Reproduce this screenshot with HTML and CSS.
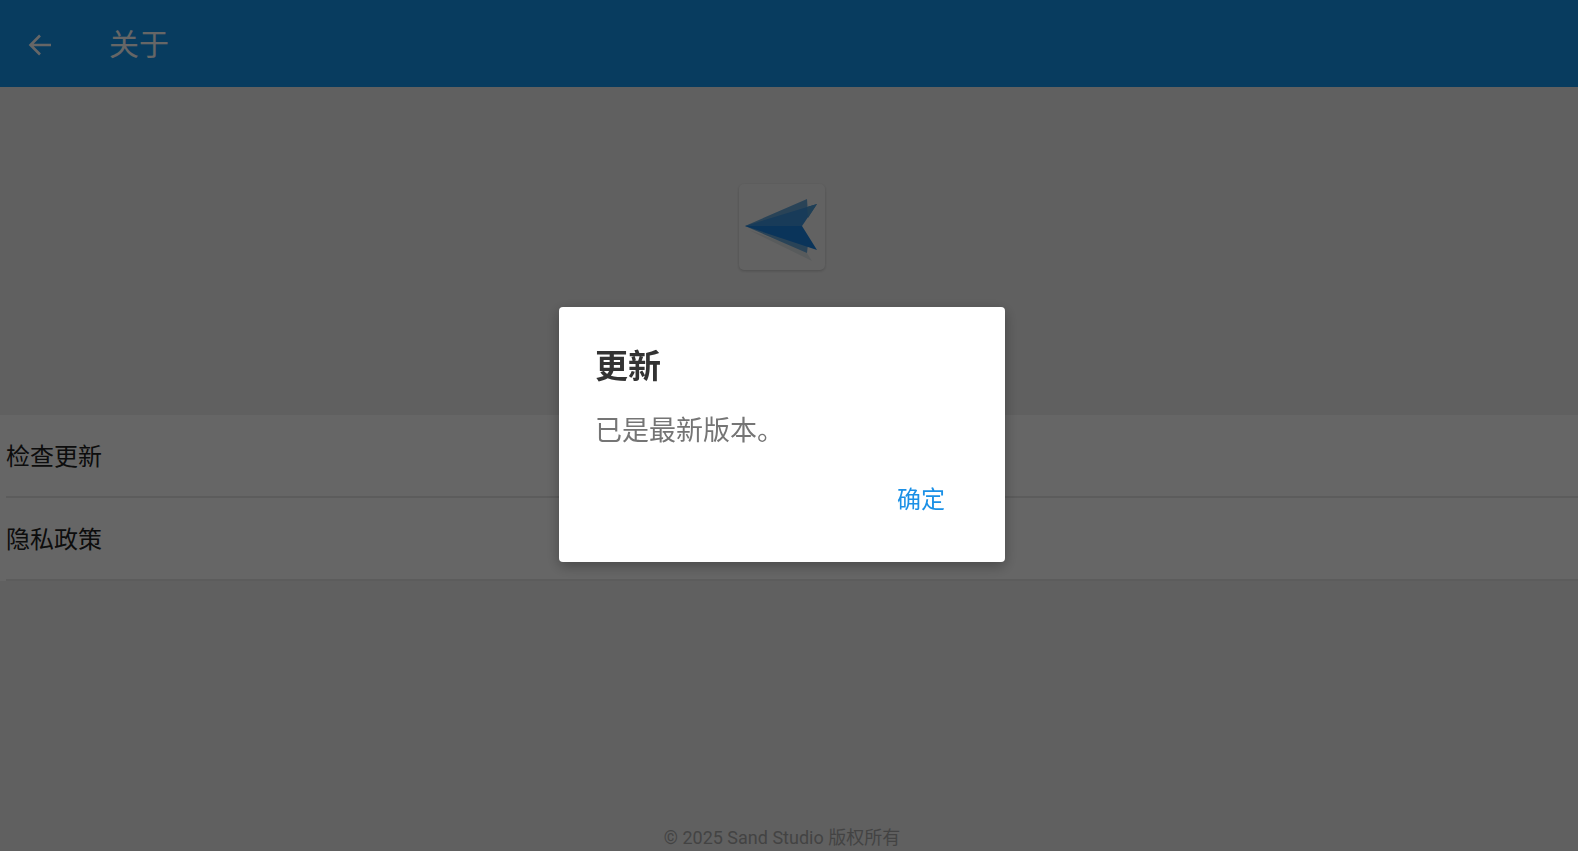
FILE: index.html
```html
<!DOCTYPE html>
<html lang="zh-CN">
<head>
<meta charset="utf-8">
<meta name="viewport" content="width=device-width, initial-scale=1">
<title>关于</title>
<link rel="stylesheet" href="styles.css">
</head>
<body>
<div class="page">
  <header class="app-bar">
    <button class="back" type="button" aria-label="返回">
      <svg class="back-icon" viewBox="0 0 24 22" fill="none" stroke="currentColor" stroke-width="2.6"><path d="M23 11H3M12 1.5 2.5 11 12 20.5"/></svg>
    </button>
    <h1 class="app-title">关于</h1>
  </header>
  <main class="content">
    <section class="hero">
      <div class="logo">
        <svg class="logo-icon" viewBox="0 0 86 86">
          <path d="M10 46 66 66 73 77Z" fill="#dde3e6"/>
          <path d="M6 42 68 15 69 30 62 42 69 60 68 69Z" fill="#68a8da"/>
          <path d="M6 42 78 20 63 42Z" fill="#3d94de"/>
          <path d="M68 23 78 20 69 34Z" fill="#4f9dd6"/>
          <path d="M6 42H63L78 66Z" fill="#1a82e0"/>
        </svg>
      </div>
    </section>
    <nav class="list">
      <a class="row" href="#update">检查更新</a>
      <a class="row" href="#privacy">隐私政策</a>
    </nav>
  </main>
  <footer class="footer">© 2025 Sand Studio 版权所有</footer>
</div>
<div class="scrim">
  <div class="dialog" role="dialog" aria-modal="true" aria-labelledby="dialog-title">
    <h2 class="dialog-title" id="dialog-title">更新</h2>
    <p class="dialog-text">已是最新版本。</p>
    <div class="dialog-actions">
      <button class="confirm" type="button">确定</button>
    </div>
  </div>
</div>
</body>
</html>
```
FILE: styles.css
```css
* { box-sizing: border-box; }

body {
  margin: 0;
  font-family: Roboto, "Noto Sans CJK SC", sans-serif;
}

button {
  padding: 0;
  border: 0;
  background: none;
  font: inherit;
}

.page {
  display: flex;
  flex-direction: column;
  min-height: 100vh;
  background: #f0f0f0;
}

.app-bar {
  display: flex;
  align-items: center;
  gap: 57px;
  height: 87px;
  padding: 2px 28px 0;
  background: #1496ee;
  color: #fff;
}

.back {
  display: flex;
  color: inherit;
}

.back-icon {
  width: 24px;
  height: 22px;
}

.app-title {
  margin: 0;
  font-size: 30px;
  line-height: 44px;
  font-weight: 400;
}

.content { flex: 1; }

.hero {
  display: flex;
  justify-content: center;
  height: 328px;
  padding: 97px 14px 0 0;
}

.logo {
  width: 86px;
  height: 86px;
  border-radius: 5px;
  background: #f5f5f5;
  box-shadow: 0 1px 3px rgba(0, 0, 0, 0.2);
}

.logo-icon {
  display: block;
  width: 100%;
}

.list {
  padding-left: 6px;
  background: #fff;
}

.row {
  display: flex;
  align-items: center;
  height: 83px;
  padding-top: 2px;
  border-bottom: 2px solid #e6e6e6;
  color: #222;
  font-size: 24px;
  line-height: 36px;
  text-decoration: none;
}

.footer {
  padding: 0 14px 0 0;
  color: #a8a8a8;
  font-size: 18px;
  line-height: 26px;
  text-align: center;
}

.scrim {
  position: fixed;
  inset: 0;
  display: flex;
  align-items: center;
  justify-content: center;
  padding: 18px 14px 0 0;
  background: rgba(0, 0, 0, 0.6);
}

.dialog {
  width: 446px;
  padding: 36px 60px 44px 36px;
  border-radius: 4px;
  background: #fff;
  box-shadow: 0 4px 14px rgba(0, 0, 0, 0.3);
}

.dialog-title {
  margin: 0;
  color: #333;
  font-size: 33px;
  line-height: 48px;
  font-weight: 700;
}

.dialog-text {
  margin: 20px 0 31px;
  color: #757575;
  font-size: 27px;
  line-height: 40px;
}

.dialog-actions {
  display: flex;
  justify-content: flex-end;
}

.confirm {
  color: #1b90e6;
  font-size: 24px;
  line-height: 36px;
}
```
